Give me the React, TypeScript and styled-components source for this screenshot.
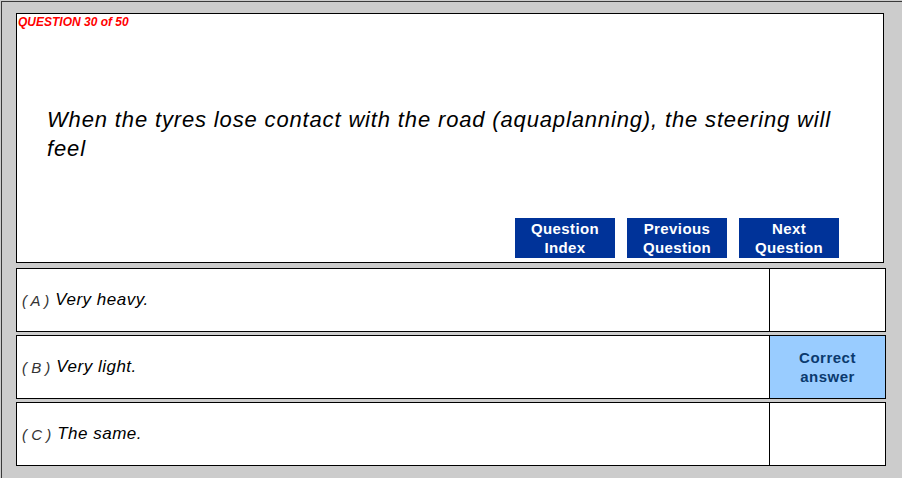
import React from 'react';
import styled, {createGlobalStyle} from 'styled-components';

const GlobalStyle = createGlobalStyle`
    html, body {
        margin: 0;
        padding: 0;
        background: #cccccc;
        font-family: "Liberation Sans", Arial, sans-serif;
    }
`;

const Frame = styled.div`
    margin: 1px 0 0 1px;
    height: 474px;
    border: 1px solid #3a3a3a;
    border-right: none;
    padding: 11px 0 0 14px;
    box-sizing: content-box;
    background: #cccccc;
`;

const QuestionPanel = styled.div`
    width: 866px;
    height: 248px;
    background: #ffffff;
    border: 1px solid #000000;
    display: flex;
    flex-direction: column;
`;

const Counter = styled.div`
    padding: 1px 0 0 1px;
    font-size: 12px;
    line-height: 14px;
    font-weight: bold;
    font-style: italic;
    color: #ff0000;
`;

const QuestionText = styled.div`
    margin-top: 76px;
    padding-left: 30px;
    width: 800px;
    font-size: 22px;
    line-height: 29px;
    letter-spacing: 0.85px;
    font-style: italic;
    color: #000000;
`;

const NavRow = styled.div`
    margin-top: auto;
    margin-bottom: 4px;
    padding-right: 44px;
    display: flex;
    justify-content: flex-end;
    gap: 12px;
`;

const NavButton = styled.button`
    width: 100px;
    height: 40px;
    padding: 0;
    border: none;
    background: #003399;
    color: #ffffff;
    font-family: "Liberation Sans", Arial, sans-serif;
    font-size: 15px;
    line-height: 19px;
    letter-spacing: 0.4px;
    font-weight: bold;
    cursor: pointer;
`;

const Answers = styled.div`
    margin-top: 5px;
    display: flex;
    flex-direction: column;
    gap: 3px;
`;

const AnswerRow = styled.div`
    width: 868px;
    height: 62px;
    background: #ffffff;
    border: 1px solid #000000;
    display: flex;
`;

const AnswerText = styled.div`
    flex: 1;
    padding-left: 5px;
    display: flex;
    align-items: center;
    font-size: 17px;
    letter-spacing: 0.5px;
    font-style: italic;
    color: #000000;
`;

const Letter = styled.span`
    font-size: 15px;
    letter-spacing: 0;
    color: #333333;
    margin-right: 6px;
`;

const ResultCell = styled.div<{ $correct?: boolean }>`
    width: 115px;
    border-left: 1px solid #000000;
    background: ${p => (p.$correct ? '#99ccff' : '#ffffff')};
    color: #0b3a6e;
    display: flex;
    align-items: center;
    justify-content: center;
    text-align: center;
    font-size: 15px;
    line-height: 19px;
    letter-spacing: 0.5px;
    font-weight: bold;
`;

const answers = [
    {letter: 'A', text: 'Very heavy.', correct: false},
    {letter: 'B', text: 'Very light.', correct: true},
    {letter: 'C', text: 'The same.', correct: false},
];

export default function App() {
    return (
        <>
            <GlobalStyle/>
            <Frame>
                <QuestionPanel>
                    <Counter>QUESTION 30 of 50</Counter>
                    <QuestionText>
                        When the tyres lose contact with the road (aquaplanning), the steering will feel
                    </QuestionText>
                    <NavRow>
                        <NavButton>Question<br/>Index</NavButton>
                        <NavButton>Previous<br/>Question</NavButton>
                        <NavButton>Next<br/>Question</NavButton>
                    </NavRow>
                </QuestionPanel>
                <Answers>
                    {answers.map(a => (
                        <AnswerRow key={a.letter}>
                            <AnswerText>
                                <Letter>( {a.letter} )</Letter>
                                {a.text}
                            </AnswerText>
                            <ResultCell $correct={a.correct}>
                                {a.correct && <>Correct<br/>answer</>}
                            </ResultCell>
                        </AnswerRow>
                    ))}
                </Answers>
            </Frame>
        </>
    );
}
